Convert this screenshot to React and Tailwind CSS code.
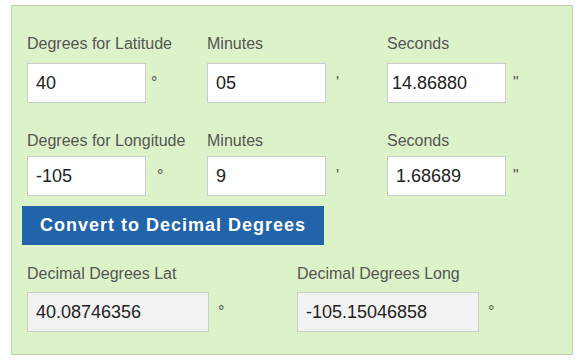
function Field({ label, value, mark, markGap, labelGap, padLeft = "pl-[8px]" }) {
  return (
    <div>
      <div className="text-[16px] leading-[18px] text-[#555555] whitespace-nowrap">{label}</div>
      <div className="flex items-center" style={{ marginTop: labelGap }}>
        <input
          readOnly
          value={value}
          className={`w-[119px] h-[40px] border border-[#cccccc] bg-white ${padLeft} text-[18px] text-[#222222] outline-none`}
        />
        <span className="text-[16px] leading-[18px] text-[#555555]" style={{ marginLeft: markGap }}>
          {mark}
        </span>
      </div>
    </div>
  );
}

function Output({ label, value }) {
  return (
    <div>
      <div className="text-[16px] leading-[18px] text-[#555555] whitespace-nowrap">{label}</div>
      <div className="flex items-center mt-[9px]">
        <input
          readOnly
          value={value}
          className="w-[182px] h-[40px] border border-[#cccccc] bg-[#f2f2f2] pl-[8px] text-[18px] text-[#222222] outline-none"
        />
        <span className="ml-[9px] text-[16px] leading-[18px] text-[#555555]">°</span>
      </div>
    </div>
  );
}

export default function App() {
  return (
    <div className="min-h-screen bg-white pt-[5px] pl-[11px] font-['Liberation_Sans',Arial,sans-serif]">
      {/* Panel */}
      <div className="w-[562px] h-[350px] border border-[#bcd2aa] bg-[#dcf2c8] pt-[29px] pl-[15px]">
        {/* Latitude */}
        <div className="grid grid-cols-[180px_180px_180px]">
          <Field label="Degrees for Latitude" value="40" mark="°" markGap="5px" labelGap="10px" />
          <Field label="Minutes" value="05" mark="'" markGap="10px" labelGap="10px" />
          <Field label="Seconds" value="14.86880" mark={'"'} markGap="7px" labelGap="10px" padLeft="pl-[4px]" />
        </div>

        {/* Longitude */}
        <div className="grid grid-cols-[180px_180px_180px] mt-[29px]">
          <Field label="Degrees for Longitude" value="-105" mark="°" markGap="11px" labelGap="6px" />
          <Field label="Minutes" value="9" mark="'" markGap="10px" labelGap="6px" />
          <Field label="Seconds" value="1.68689" mark={'"'} markGap="7px" labelGap="6px" />
        </div>

        {/* Button */}
        <button className="mt-[10px] ml-[-5px] w-[302px] h-[39px] bg-[#2264a9] text-white font-bold text-[18px] tracking-[1px]">
          Convert to Decimal Degrees
        </button>

        {/* Result */}
        <div className="grid grid-cols-[270px_270px] mt-[20px]">
          <Output label="Decimal Degrees Lat" value="40.08746356" />
          <Output label="Decimal Degrees Long" value="-105.15046858" />
        </div>
      </div>
    </div>
  );
}
